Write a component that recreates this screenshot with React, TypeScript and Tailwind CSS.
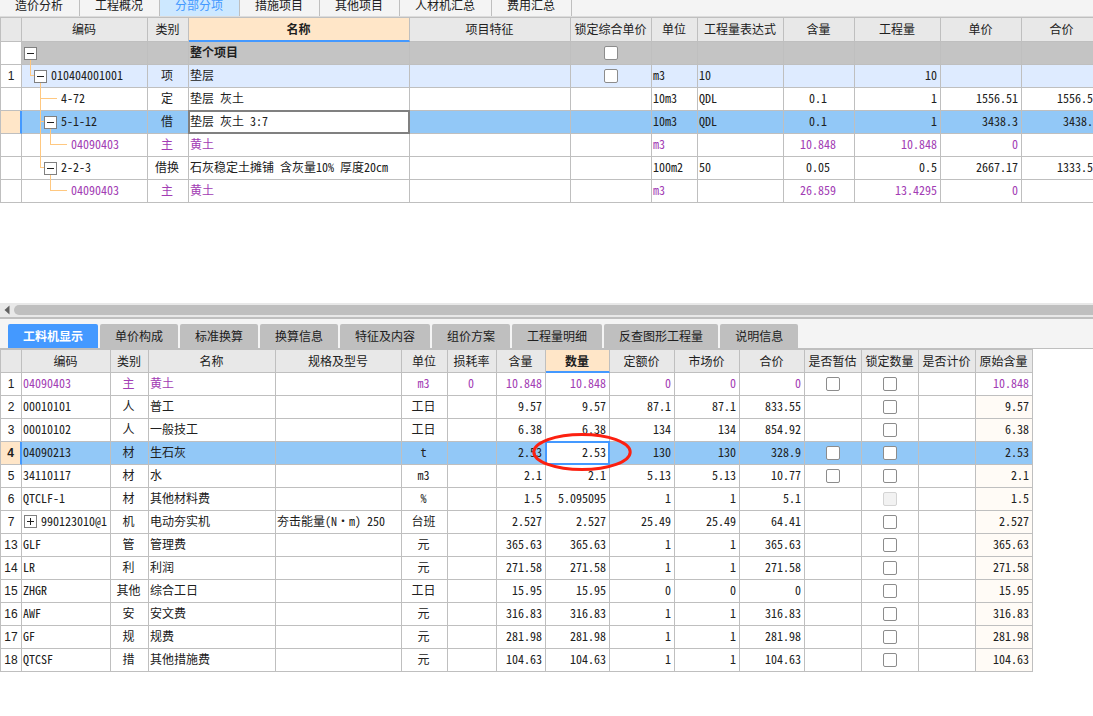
import React from "react";

type Align = "left" | "center" | "right";
interface Column {
  title: string;
  width: number;
  align: Align;
}

const alignClass: Record<Align, string> = {
  left: "text-left",
  center: "text-center",
  right: "text-right",
};

const col = (title: string, width: number, align: Align = "left"): Column => ({ title, width, align });

const frame = "relative h-[23px] whitespace-nowrap border-b border-r border-[#bfbfbf] leading-[20px]";
const cellBase = `${frame} pb-[2px] pl-px pr-[3px] pt-0`;
const checkCell = `${frame} p-0`;
const numberCell = "relative h-[23px] border-b border-[#bfbfbf] p-0 text-center font-['Liberation_Sans',sans-serif] leading-[20px]";
const numberSelected = "border-r-2 border-r-[#4499ff] bg-[#ffe6c8] font-bold";

function Check({ label, disabled = false }: { label: string; disabled?: boolean }) {
  return (
    <input
      type="checkbox"
      aria-label={label}
      disabled={disabled}
      className="mx-auto block size-[14px] appearance-none rounded-[2px] border border-[#8c8c8c] bg-white checked:bg-[#4499ff] disabled:border-[#d4d4d4] disabled:bg-[#f2f2f2]"
    />
  );
}

function Toggle({ open }: { open: boolean }) {
  return (
    <button
      type="button"
      aria-label={open ? "折叠" : "展开"}
      className="block size-[13px] shrink-0 border border-[#808080] bg-white"
    >
      <svg viewBox="0 0 11 11" className="block size-[11px]" shapeRendering="crispEdges">
        <path d={open ? "M2 5h7v1H2z" : "M2 5h7v1H2zM5 2h1v7H5z"} fill="#202020" />
      </svg>
    </button>
  );
}

function HeaderRow({ columns, active, tall }: { columns: Column[]; active: string; tall: boolean }) {
  return (
    <thead>
      <tr>
        {columns.map((c, i) => (
          <th
            key={i}
            scope="col"
            className={`${tall ? "h-[24px]" : "h-[23px]"} overflow-hidden whitespace-nowrap border-r pl-0 pr-px pt-0 text-center leading-[20px] ${
              c.title === active
                ? "border-b-2 border-b-[#4499ff] border-r-[#bfbfbf] bg-[#ffe6c8] pb-0 font-bold"
                : "border-b border-[#bfbfbf] bg-[#e8e8e8] font-normal " + (tall ? "pb-[2px]" : "pb-0")
            }`}
          >
            {c.title}
          </th>
        ))}
      </tr>
    </thead>
  );
}

function Cols({ columns }: { columns: Column[] }) {
  return (
    <colgroup>
      {columns.map((c, i) => (
        <col key={i} style={{ width: c.width }} />
      ))}
    </colgroup>
  );
}

const tableClass = "table-fixed border-separate border-spacing-0 border-l border-t border-[#bfbfbf]";
const total = (columns: Column[]) => columns.reduce((sum, c) => sum + c.width, 1);

/* ---------- upper grid ---------- */

const projectColumns: Column[] = [
  col("", 21, "center"),
  col("编码", 126),
  col("类别", 41, "center"),
  col("名称", 221),
  col("项目特征", 161),
  col("锁定综合单价", 81, "center"),
  col("单位", 46),
  col("工程量表达式", 86),
  col("含量", 71, "center"),
  col("工程量", 86, "right"),
  col("单价", 81, "right"),
  col("合价", 81, "right"),
];

interface ProjectRow {
  no?: string;
  code: string;
  depth: string;
  toggle?: boolean;
  lines: string;
  check?: boolean;
  tone: "total" | "item" | "plain" | "selected" | "main";
  values: string[];
}

const projectRows: ProjectRow[] = [
  { code: "", depth: "pl-[2px]", toggle: true, lines: "M8.5 17V23", check: true, tone: "total", values: ["", "整个项目", "", "", "", "", "", "", ""] },
  { no: "1", code: "010404001001", depth: "pl-[12px]", toggle: true, lines: "M8.5 0V10.5H12M18.5 17V23", check: true, tone: "item", values: ["项", "垫层", "m3", "10", "", "10", "", ""] },
  { code: "4-72", depth: "pl-[39px]", lines: "M18.5 0V23M18.5 10.5H35", tone: "plain", values: ["定", "垫层 灰土", "10m3", "QDL", "0.1", "1", "1556.51", "1556.51"] },
  { code: "5-1-12", depth: "pl-[22px]", toggle: true, lines: "M18.5 0V23M18.5 10.5H22M28.5 17V23", tone: "selected", values: ["借", "垫层 灰土 3:7", "10m3", "QDL", "0.1", "1", "3438.3", "3438.3"] },
  { code: "04090403", depth: "pl-[49px]", lines: "M18.5 0V23M28.5 0V10.5H45", tone: "main", values: ["主", "黄土", "m3", "", "10.848", "10.848", "0", ""] },
  { code: "2-2-3", depth: "pl-[22px]", toggle: true, lines: "M18.5 0V10.5H22M28.5 17V23", tone: "plain", values: ["借换", "石灰稳定土摊铺 含灰量10% 厚度20cm", "100m2", "50", "0.05", "0.5", "2667.17", "1333.59"] },
  { code: "04090403", depth: "pl-[49px]", lines: "M28.5 0V10.5H45", tone: "main", values: ["主", "黄土", "m3", "", "26.859", "13.4295", "0", ""] },
];

const toneClass = {
  total: "bg-[#c4c4c4]",
  item: "bg-[#deebff]",
  plain: "bg-white",
  selected: "bg-[#92c8f7]",
  main: "bg-white text-[#a23cb4]",
};

function ProjectGrid() {
  return (
    <table aria-label="分部分项" className={tableClass} style={{ width: total(projectColumns) }}>
      <Cols columns={projectColumns} />
      <HeaderRow columns={projectColumns} active="名称" tall />
      <tbody>
        {projectRows.map((r, i) => {
          const selected = r.tone === "selected";
          const [kind, name, ...rest] = r.values;
          return (
            <tr key={i} className={toneClass[r.tone]}>
              <td className={`${numberCell} ${selected ? numberSelected : "border-r bg-white"}`}>{r.no}</td>
              <td className="relative h-[23px] border-b border-r border-[#bfbfbf] p-0">
                <svg
                  width="126"
                  height="23"
                  className="pointer-events-none absolute left-0 top-0"
                  shapeRendering="crispEdges"
                >
                  <path d={r.lines} fill="none" stroke="#ffc880" strokeWidth="1" />
                </svg>
                <div className={`relative flex items-center gap-1 leading-[20px] ${r.depth}`}>
                  {r.toggle && <Toggle open />}
                  <span className="pb-[2px]">{r.code}</span>
                </div>
              </td>
              <td className={`${cellBase} text-center`}>{kind}</td>
              <td className={`${cellBase} ${selected ? "bg-white" : ""} ${r.tone === "total" ? "font-bold" : ""}`}>
                {name}
                {selected && <span className="pointer-events-none absolute -inset-px z-10 border-2 border-[#808080]" />}
              </td>
              <td className={cellBase} />
              <td className={checkCell}>{r.check && <Check label="锁定综合单价" />}</td>
              {rest.slice(0, 6).map((v, j) => (
                <td key={j} className={`${cellBase} ${alignClass[projectColumns[j + 6].align]}`}>
                  {v}
                </td>
              ))}
            </tr>
          );
        })}
      </tbody>
    </table>
  );
}

/* ---------- lower grid ---------- */

const resourceColumns: Column[] = [
  col("", 21, "center"),
  col("编码", 89),
  col("类别", 38, "center"),
  col("名称", 127),
  col("规格及型号", 126),
  col("单位", 46, "center"),
  col("损耗率", 49, "center"),
  col("含量", 49, "right"),
  col("数量", 64, "right"),
  col("定额价", 65, "right"),
  col("市场价", 65, "right"),
  col("合价", 65, "right"),
  col("是否暂估", 57, "center"),
  col("锁定数量", 57, "center"),
  col("是否计价", 57, "center"),
  col("原始含量", 57, "right"),
];

const resourceRows: string[][] = [
  ["1", "04090403", "主", "黄土", "", "m3", "0", "10.848", "10.848", "0", "0", "0", "10.848"],
  ["2", "00010101", "人", "普工", "", "工日", "", "9.57", "9.57", "87.1", "87.1", "833.55", "9.57"],
  ["3", "00010102", "人", "一般技工", "", "工日", "", "6.38", "6.38", "134", "134", "854.92", "6.38"],
  ["4", "04090213", "材", "生石灰", "", "t", "", "2.53", "2.53", "130", "130", "328.9", "2.53"],
  ["5", "34110117", "材", "水", "", "m3", "", "2.1", "2.1", "5.13", "5.13", "10.77", "2.1"],
  ["6", "QTCLF-1", "材", "其他材料费", "", "%", "", "1.5", "5.095095", "1", "1", "5.1", "1.5"],
  ["7", "990123010@1", "机", "电动夯实机", "夯击能量(N·m) 250", "台班", "", "2.527", "2.527", "25.49", "25.49", "64.41", "2.527"],
  ["13", "GLF", "管", "管理费", "", "元", "", "365.63", "365.63", "1", "1", "365.63", "365.63"],
  ["14", "LR", "利", "利润", "", "元", "", "271.58", "271.58", "1", "1", "271.58", "271.58"],
  ["15", "ZHGR", "其他", "综合工日", "", "工日", "", "15.95", "15.95", "0", "0", "0", "15.95"],
  ["16", "AWF", "安", "安文费", "", "元", "", "316.83", "316.83", "1", "1", "316.83", "316.83"],
  ["17", "GF", "规", "规费", "", "元", "", "281.98", "281.98", "1", "1", "281.98", "281.98"],
  ["18", "QTCSF", "措", "其他措施费", "", "元", "", "104.63", "104.63", "1", "1", "104.63", "104.63"],
];

const estimateRows = ["1", "4", "5"];

function ResourceGrid() {
  return (
    <table aria-label="工料机显示" className={tableClass} style={{ width: total(resourceColumns) }}>
      <Cols columns={resourceColumns} />
      <HeaderRow columns={resourceColumns} active="数量" tall={false} />
      <tbody>
        {resourceRows.map((r) => {
          const [no, code, ...rest] = r;
          const original = rest[rest.length - 1];
          const middle = rest.slice(0, -1);
          const selected = no === "4";
          const main = no === "1";
          return (
            <tr key={no} className={selected ? "bg-[#92c8f7]" : "bg-white"}>
              <td className={`${numberCell} ${selected ? numberSelected : "border-r"}`}>{no}</td>
              <td className={`${cellBase} ${main ? "text-[#a23cb4]" : ""}`}>
                {no === "7" ? (
                  <span className="flex items-center gap-1 pl-px">
                    <Toggle open={false} />
                    {code}
                  </span>
                ) : (
                  code
                )}
              </td>
              {middle.map((v, j) => {
                const current = selected && j === 6;
                return (
                  <td
                    key={j}
                    className={`${cellBase} ${alignClass[resourceColumns[j + 2].align]} ${main ? "text-[#a23cb4]" : ""} ${
                      current ? "bg-white" : ""
                    }`}
                  >
                    {v}
                    {current && (
                      <>
                        <span className="pointer-events-none absolute -inset-px z-10 border-2 border-[#4499ff]" />
                        <svg
                          width="100"
                          height="40"
                          viewBox="0 0 100 40"
                          className="pointer-events-none absolute -left-[14px] -top-[10px] z-20 max-w-none"
                        >
                          <ellipse cx="50" cy="20" rx="48.2" ry="17.6" fill="none" stroke="#fc2010" strokeWidth="3" />
                        </svg>
                      </>
                    )}
                  </td>
                );
              })}
              <td className={checkCell}>{estimateRows.includes(no) && <Check label="是否暂估" />}</td>
              <td className={checkCell}>
                <Check label="锁定数量" disabled={no === "6"} />
              </td>
              <td className={cellBase} />
              <td
                className={`${cellBase} text-right ${main ? "text-[#a23cb4]" : selected ? "" : "bg-[#fffbf6]"}`}
              >
                {original}
              </td>
            </tr>
          );
        })}
      </tbody>
    </table>
  );
}

/* ---------- tabs ---------- */

const mainTabs = ["造价分析", "工程概况", "分部分项", "措施项目", "其他项目", "人材机汇总", "费用汇总"];
const detailTabs = ["工料机显示", "单价构成", "标准换算", "换算信息", "特征及内容", "组价方案", "工程量明细", "反查图形工程量", "说明信息"];

export default function App() {
  return (
    <main className="min-h-screen overflow-hidden bg-white font-['Noto_Sans_Mono_CJK_SC','Noto_Sans_CJK_SC',monospace] text-[12px] text-[#202020]">
      <nav aria-label="主页签" className="flex h-[17px] items-end overflow-hidden border-b border-[#dcdcdc] bg-[#f4f4f4]">
        {mainTabs.map((t) => (
          <button
            key={t}
            type="button"
            className={`h-[22px] shrink-0 border-r border-[#bfbfbf] pl-[15px] pr-[16px] leading-[20px] ${
              t === "分部分项" ? "bg-[#cde8ff] text-[#4499ff]" : ""
            }`}
          >
            {t}
          </button>
        ))}
      </nav>
      <section className="overflow-hidden pb-[100px]">
        <ProjectGrid />
      </section>
      <div className="flex h-[14px] items-center bg-[#e8e8e8]">
        <button type="button" aria-label="向左滚动" className="flex w-[14px] shrink-0 justify-center">
          <svg width="6" height="10" viewBox="0 0 6 10">
            <path d="M5.5 0.5v9L0.5 5z" fill="#606060" />
          </svg>
        </button>
        <div className="h-[10px] flex-1 rounded-l-full bg-[#bfbfbf]" />
      </div>
      <section className="border-t-2 border-[#bfbfbf]">
        <nav aria-label="明细页签" className="flex gap-[2px] border-b border-[#bfbfbf] bg-[#f4f4f4] pl-2 pt-[5px]">
          {detailTabs.map((t, i) => (
            <button
              key={t}
              type="button"
              className={`h-6 shrink-0 rounded-t-[2px] px-[15px] leading-[24px] ${
                i === 0 ? "bg-[#4499ff] font-bold text-white" : "bg-[#bfbfbf]"
              }`}
            >
              {t}
            </button>
          ))}
        </nav>
        <ResourceGrid />
      </section>
    </main>
  );
}
